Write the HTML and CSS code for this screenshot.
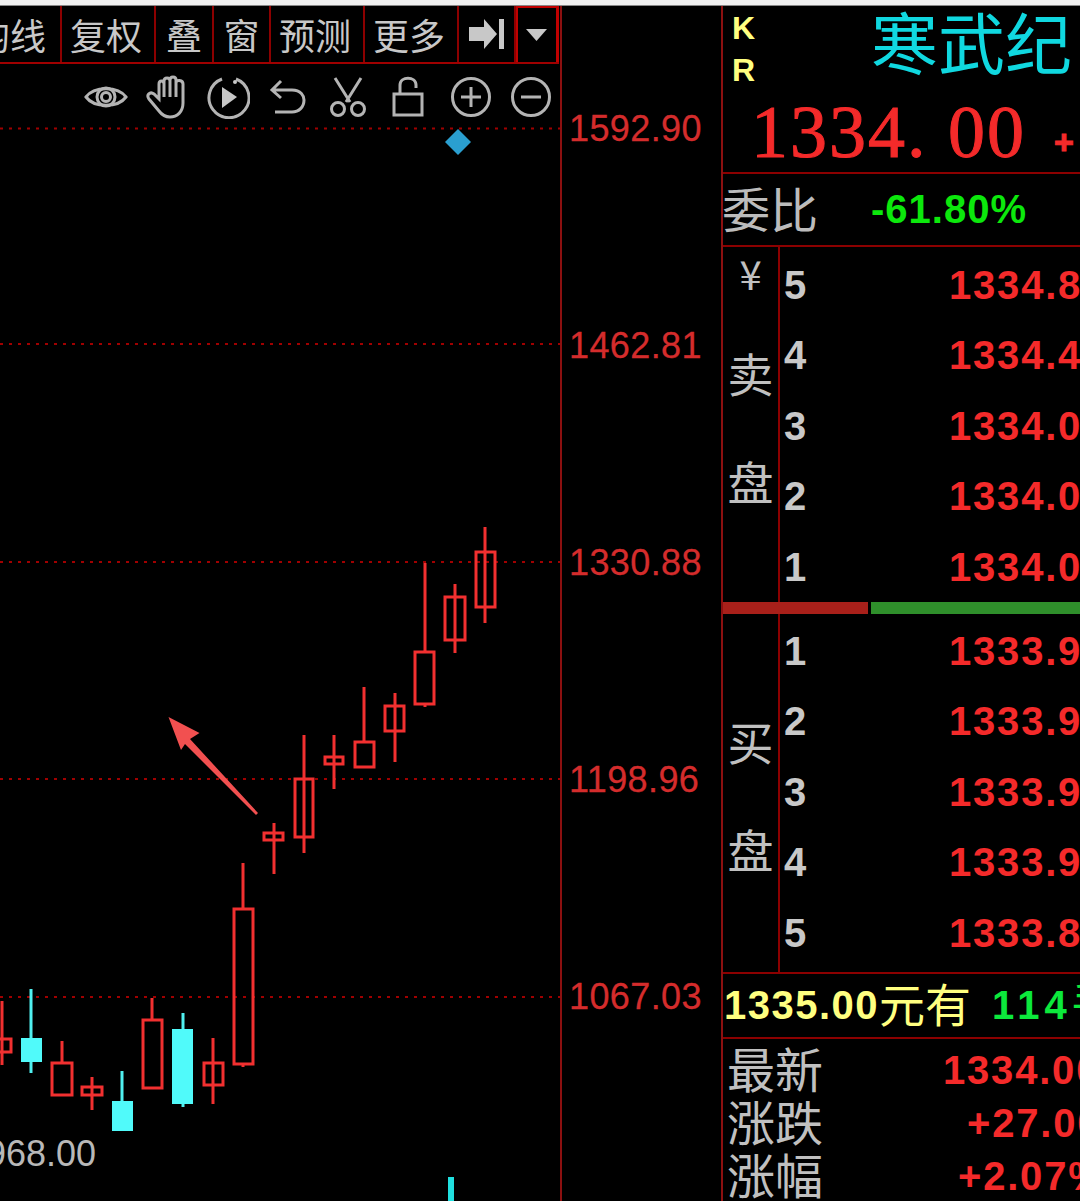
FILE: index.html
```html
<!DOCTYPE html>
<html lang="zh-CN">
<head>
  <meta charset="UTF-8" />
  <title>寒武纪 K线</title>
  <link rel="stylesheet" href="styles.css">
</head>
<body>
  <div class="top-strip"></div>
  <div class="main">
    <div class="chart-col">
      <div class="toolbar">
        <div class="tool tool-first">均线</div>
        <div class="tool tool-2">复权</div>
        <div class="tool tool-3">叠</div>
        <div class="tool tool-4">窗</div>
        <div class="tool tool-2">预测</div>
        <div class="tool tool-2">更多</div>
        <div class="tool tool-5">
          <svg width="40" height="36" viewBox="0 0 40 36"><path class="solid" d="M2 11h15V3l13 15-13 15v-8H2zM32 3h5v30h-5z"/></svg>
        </div>
        <div class="tool tool-drop">
          <svg width="24" height="14" viewBox="0 0 24 14"><path class="solid" d="M1 1h21L11.500 13z"/></svg>
        </div>
      </div>
      <div class="chart">
        <div class="icon-row">
          <svg class="icon icon-eye" viewBox="0 0 44 44"><path d="M2 22C10 11 34 11 42 22 34 33 10 33 2 22z"/><circle cx="22" cy="22" r="9"/><circle cx="22" cy="22" r="4.500"/></svg>
          <svg class="icon icon-hand" viewBox="0 0 44 44"><path d="M14 36L4 24C1 20 5 16 9 19L14 24V9C14 5 19 5 19 9V6C19 2 25 2 25 6V5C25 1 31 1 31 5V8C31 4 38 5 38 9V28C38 37 32 42 25 42 20 42 17 40 14 36zM19 9V22M25 6V22M31 8V22"/></svg>
          <svg class="icon" viewBox="0 0 44 44"><path d="M30 4a20 20 0 1 1-14 0"/><path class="solid" d="M16 12l15 10-15 11z"/><circle class="solid" cx="29" cy="7" r="2"/></svg>
          <svg class="icon" viewBox="0 0 44 44"><path d="M15 6L6 15l9 8M6 15h20c9 0 12 6 12 10 0 7-5 12-12 12H9"/></svg>
          <svg class="icon" viewBox="0 0 44 44"><path d="M9 3l15 24M35 3L20 27"/><circle cx="12" cy="34" r="6.500"/><circle cx="32" cy="34" r="6.500"/></svg>
          <svg class="icon icon-lock" viewBox="0 0 44 44"><path d="M8 19h28v21H8zM14 19V10c0-9 16-9 16 0v3"/></svg>
          <svg class="icon" viewBox="0 0 44 44"><circle cx="22" cy="22" r="18.500"/><path d="M22 12v20M12 22h20"/></svg>
          <svg class="icon" viewBox="0 0 44 44"><circle cx="22" cy="22" r="18.500"/><path d="M12 22h20"/></svg>
        </div>
        <svg class="plot" viewBox="0 64 560 1137">
          <g class="grid">
            <path d="M0 128.500H560"/>
            <path d="M0 344H560"/>
            <path d="M0 562H560"/>
            <path d="M0 779H560"/>
            <path d="M0 997H560"/>
          </g>
          <path class="marker" d="M458 129l13 13-13 13-13-13z"/>
          <g class="up">
            <path d="M2 1001V1065M-8 1039H11V1052H-8z"/>
            <path d="M62 1041V1062M52 1063H72V1095H52z"/>
            <path d="M92 1077V1110M82 1087H102V1095H82z" fill="#000"/>
            <path d="M152 998V1020M143 1020H162V1088H143z"/>
            <path d="M213 1038V1104M204 1063H223V1085H204z"/>
            <path d="M243 863V908M234 909H253V1064H234zM243 1064V1067"/>
            <path d="M274 823V874M264 833H283V840H264z"/>
            <path d="M304 735V853M295 779H313V837H295z"/>
            <path d="M334 735V789M325 757H343V764H325z"/>
            <path d="M364 687V742M355 742H374V767H355z"/>
            <path d="M395 693V762M385 706H404V731H385z"/>
            <path d="M425 563V651M415 652H434V704H415zM425 704V707"/>
            <path d="M455 584V653M445 597H465V640H445z"/>
            <path d="M485 527V623M476 552H495V607H476z"/>
          </g>
          <g class="down">
            <path d="M31 989V1073"/>
            <rect x="21" y="1038" width="21" height="24"/>
            <path d="M122 1071V1101"/>
            <rect x="112" y="1101" width="21" height="30"/>
            <path d="M183 1013V1107"/>
            <rect x="172" y="1029" width="21" height="75"/>
          </g>
          <polygon class="arrow" points="168.500,717 199.500,733 190,739 258,813 256,815 185,744 181,750"/>
          <rect class="tick" x="448" y="1177" width="6" height="24"/>
        </svg>
        <div class="low-price">968.00</div>
      </div>
    </div>

    <div class="axis-col">
      <div class="axis-label">1592.90</div>
      <div class="axis-label">1462.81</div>
      <div class="axis-label">1330.88</div>
      <div class="axis-label">1198.96</div>
      <div class="axis-label">1067.03</div>
    </div>

    <div class="panel">
      <div class="head">
        <div class="code-flags"><span>K</span><span>R</span></div>
        <div class="head-main">
          <div class="stock-name">寒武纪</div>
          <div class="stock-price"><span>1334. 00</span><span class="stock-change">+</span></div>
        </div>
      </div>

      <div class="ratio-row">
        <span class="ratio-label">委比</span>
        <span class="ratio-value">-61.80%</span>
      </div>

      <div class="book book-sell">
        <div class="book-side">
          <span class="yen">¥</span>
          <span>卖</span>
          <span>盘</span>
        </div>
        <div class="book-rows">
          <div class="book-row"><b>5</b><span>1334.8</span></div>
          <div class="book-row"><b>4</b><span>1334.4</span></div>
          <div class="book-row"><b>3</b><span>1334.0</span></div>
          <div class="book-row"><b>2</b><span>1334.0</span></div>
          <div class="book-row"><b>1</b><span>1334.0</span></div>
        </div>
      </div>

      <div class="power-bar">
        <div class="power-red"></div>
        <div class="power-green"></div>
      </div>

      <div class="book book-buy">
        <div class="book-side">
          <span>买</span>
          <span>盘</span>
        </div>
        <div class="book-rows">
          <div class="book-row"><b>1</b><span>1333.9</span></div>
          <div class="book-row"><b>2</b><span>1333.9</span></div>
          <div class="book-row"><b>3</b><span>1333.9</span></div>
          <div class="book-row"><b>4</b><span>1333.9</span></div>
          <div class="book-row"><b>5</b><span>1333.8</span></div>
        </div>
      </div>

      <div class="order-row">
        <span class="order-price">1335.00</span><span class="order-unit">元有</span>
        <span class="order-qty">114<i>手</i></span>
      </div>

      <div class="stats">
        <div class="stat-row"><span>最新</span><b class="stat-1">1334.00</b></div>
        <div class="stat-row"><span>涨跌</span><b class="stat-2">+27.00</b></div>
        <div class="stat-row"><span>涨幅</span><b class="stat-3">+2.07%</b></div>
      </div>
    </div>
  </div>
</body>
</html>
```

FILE: styles.css
```css
html, body {
  height: 100%;
  margin: 0;
  padding: 0;
  background: #000;
  overflow: hidden;
  font-family: "Liberation Sans", "Noto Sans CJK SC", sans-serif;
}

.top-strip {
  height: 5px;
  background: #f0f0f0;
  border-bottom: 1px solid #888;
}

.main {
  display: flex;
  height: 1195px;
}

/* left: toolbar + chart */
.chart-col {
  width: 560px;
  flex: none;
  border-right: 2px solid #8c1010;
  display: flex;
  flex-direction: column;
}

.toolbar {
  display: flex;
  height: 58px;
  flex: none;
  border-bottom: 2px solid #a00000;
  box-sizing: border-box;
  width: 559px;
}

.tool {
  box-sizing: border-box;
  border-right: 2px solid #8c0000;
  color: #c8c8c8;
  font-family: "Noto Sans CJK SC", sans-serif;
  font-size: 36px;
  line-height: 56px;
  text-align: center;
  white-space: nowrap;
  overflow: hidden;
  display: flex;
  align-items: center;
  justify-content: center;
}

.tool-first { width: 62px; justify-content: flex-end; padding-right: 14px; }
.tool-2 { width: 94px; padding-right: 4px; }
.tool-3 { width: 58px; }
.tool-4 { width: 57px; }
.tool-5 { width: 57px; }
.tool-drop {
  width: 43px;
  border: 2px solid #c00000;
  border-bottom: none;
  border-right-width: 3px;
}

.solid { fill: #c8c8c8; stroke: none; }

.chart {
  position: relative;
  flex: 1;
  overflow: hidden;
}

.plot {
  display: block;
  width: 560px;
  height: 1137px;
}

.grid path {
  fill: none;
  stroke: #a00000;
  stroke-width: 2;
  stroke-dasharray: 3 6;
}

.up path {
  fill: none;
  stroke: #f23030;
  stroke-width: 3;
}

.down path {
  fill: none;
  stroke: #50f0f0;
  stroke-width: 3;
}

.down rect { fill: #50fafa; }

.marker { fill: #2a9fd0; }
.arrow { fill: #f25050; }
.tick { fill: #20e0e0; }

.icon-row {
  position: absolute;
  top: 11px;
  right: 7px;
  display: flex;
  gap: 16px;
}

.icon {
  width: 44px;
  height: 44px;
  fill: none;
  stroke: #b4b4b4;
  stroke-width: 3;
}

.icon-eye { margin-right: 1px; }
.icon-hand { margin-right: 1px; }
.icon-lock { margin-right: 3px; }

.low-price {
  position: absolute;
  left: -14px;
  top: 1070px;
  color: #b8b8b8;
  font-size: 36px;
  line-height: 40px;
}

/* price axis */
.axis-col {
  width: 159px;
  flex: none;
  padding-top: 14px;
  box-sizing: border-box;
}

.axis-label {
  height: 217px;
  line-height: 217px;
  padding-left: 7px;
  color: #d42c2c;
  font-size: 36px;
  letter-spacing: 0.400px;
  -webkit-text-stroke: 0.300px #d42c2c;
}

/* right panel */
.panel {
  flex: 1;
  min-width: 0;
  border-left: 2px solid #8c1010;
  overflow: hidden;
  font-weight: bold;
}

.head {
  height: 168px;
  box-sizing: border-box;
  border-bottom: 2px solid #8c0000;
  display: flex;
}

.code-flags {
  display: flex;
  flex-direction: column;
  width: 30px;
  padding: 1px 0 0 9px;
  flex: none;
  color: #ffff80;
  font-size: 32px;
  line-height: 42px;
}

.head-main { flex: 1; min-width: 0; }

.stock-name {
  color: #10d8e0;
  font-family: "Noto Sans CJK SC", sans-serif;
  font-weight: normal;
  font-size: 67px;
  line-height: 68px;
  padding-left: 109px;
  height: 94px;
  white-space: nowrap;
}

.stock-price {
  color: #f42a2a;
  font-family: "Liberation Serif", serif;
  font-weight: normal;
  font-size: 74px;
  line-height: 64px;
  letter-spacing: 2px;
  -webkit-text-stroke: 1px #f42a2a;
  display: flex;
  white-space: nowrap;
  margin-left: -11px;
}

.stock-change {
  font-family: "Liberation Sans", sans-serif;
  font-weight: bold;
  font-size: 34px;
  margin-left: 28px;
  padding-top: 10px;
}

.ratio-row {
  height: 73px;
  box-sizing: border-box;
  border-bottom: 2px solid #8c0000;
  display: flex;
  align-items: center;
}

.ratio-label {
  width: 149px;
  margin-left: -1px;
  padding-bottom: 6px;
  flex: none;
  color: #bcbcbc;
  font-family: "Noto Sans CJK SC", sans-serif;
  font-weight: normal;
  font-size: 48px;
  white-space: nowrap;
}

.ratio-value {
  color: #0ce80c;
  font-size: 40px;
  letter-spacing: 1px;
}

.book { display: flex; }
.book-sell { height: 355px; }
.book-buy { height: 358px; }

.book-side {
  width: 55px;
  flex: none;
  border-right: 2px solid #8c0000;
  color: #c0c0c0;
  font-family: "Noto Sans CJK SC", sans-serif;
  font-weight: normal;
  font-size: 46px;
  text-align: center;
  display: flex;
  flex-direction: column;
  align-items: center;
  box-sizing: content-box;
}

.book-sell .book-side { padding-top: 1px; height: 354px; }
.book-sell .book-side span { height: 108px; line-height: 108px; }
.book-sell .book-side .yen { height: 70px; line-height: 50px; font-size: 40px; }
.book-buy .book-side { padding-top: 72px; height: 286px; }
.book-buy .book-side span { height: 108px; line-height: 108px; }

.book-rows {
  flex: 1;
  min-width: 0;
  padding-left: 4px;
  display: flex;
  flex-direction: column;
}

.book-sell .book-rows { padding-top: 3px; }
.book-buy .book-rows { padding-top: 1.500px; }

.book-row {
  height: 70.500px;
  line-height: 70px;
  display: flex;
  font-size: 40px;
  white-space: nowrap;
}

.book-row b {
  width: 165px;
  flex: none;
  color: #c8c8c8;
}

.book-row span {
  color: #f42a2a;
  letter-spacing: 1.800px;
}

.power-bar {
  height: 12px;
  display: flex;
  gap: 3px;
  margin-left: -2px;
}

.power-red { width: 147px; background: #a8201a; }
.power-green { flex: 1; background: #2f8f2b; }

.order-row {
  height: 67px;
  box-sizing: border-box;
  border-top: 2px solid #8c0000;
  border-bottom: 2px solid #8c0000;
  display: flex;
  align-items: center;
  white-space: nowrap;
  padding-left: 1px;
}

.order-price {
  color: #ffff80;
  font-size: 40px;
  letter-spacing: 1.500px;
}

.order-unit {
  color: #ffff80;
  font-family: "Noto Sans CJK SC", sans-serif;
  font-weight: normal;
  font-size: 46px;
  padding-bottom: 8px;
}

.order-qty {
  color: #0ce83c;
  font-size: 40px;
  letter-spacing: 5px;
  margin-left: 21px;
  padding-bottom: 12px;
}

.order-qty i {
  font-family: "Noto Sans CJK SC", sans-serif;
  font-style: normal;
  font-weight: normal;
  font-size: 44px;
}

.stats { padding-left: 4px; padding-top: 2px; }

.stat-row {
  height: 53px;
  line-height: 53px;
  display: flex;
  white-space: nowrap;
}

.stat-row span {
  width: 96px;
  flex: none;
  color: #c0c0c0;
  font-family: "Noto Sans CJK SC", sans-serif;
  font-weight: normal;
  font-size: 48px;
}

.stat-row b {
  color: #f42a2a;
  font-size: 40px;
  letter-spacing: 1.800px;
  line-height: 59px;
}

.stat-1 { margin-left: 120px; }
.stat-2 { margin-left: 144px; }
.stat-3 { margin-left: 135px; }
```
